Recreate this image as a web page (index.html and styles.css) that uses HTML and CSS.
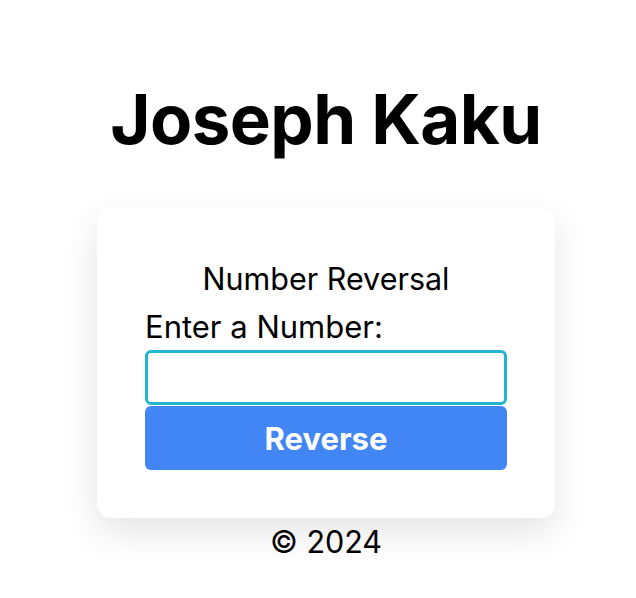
FILE: index.html
```html
<!DOCTYPE html>
<html lang="en">
<head>
<meta charset="utf-8">
<title>Joseph Kaku</title>
<link rel="stylesheet" href="styles.css">
</head>
<body>
<main class="page">
  <h1 class="title">Joseph Kaku</h1>
  <section class="card">
    <h2 class="card-title">Number Reversal</h2>
    <label class="label" for="num">Enter a Number:</label>
    <input class="input" id="num" type="text">
    <button class="button" type="button">Reverse</button>
  </section>
  <footer class="footer">© 2024</footer>
</main>
</body>
</html>
```
FILE: styles.css
```css
html, body {
  margin: 0;
  padding: 0;
  background: #ffffff;
}
body {
  font-family: Inter, "Liberation Sans", sans-serif;
  color: #000;
}
.page {
  display: flex;
  flex-direction: column;
  align-items: center;
  padding: 0 0 0 16px;
}
.title {
  margin: 77px 0 0;
  font-size: 69px;
  font-weight: 700;
  line-height: 84px;
  letter-spacing: -0.6px;
}
.card {
  margin-top: 47px;
  width: 458px;
  box-sizing: border-box;
  padding: 52px 48px 48px;
  background: #fff;
  border-radius: 14px;
  box-shadow: 0 14px 36px rgba(0,0,0,0.11);
  display: flex;
  flex-direction: column;
}
.card-title {
  margin: 0;
  font-size: 30.5px;
  font-weight: 400;
  line-height: 38px;
  text-align: center;
}
.label {
  margin-top: 10px;
  font-size: 31px;
  line-height: 38px;
}
.input {
  margin: 4px 0 0;
  height: 55px;
  box-sizing: border-box;
  border: 3px solid #21b5cf;
  border-radius: 6px;
  outline: none;
  font-size: 24px;
  padding: 0 8px;
}
.button {
  margin-top: 1px;
  height: 64px;
  border: none;
  border-radius: 6px;
  background: #4285f4;
  color: #fff;
  font-family: Inter, "Liberation Sans", sans-serif;
  font-size: 31px;
  font-weight: 700;
}
.footer {
  margin-top: 6px;
  font-size: 30.5px;
  line-height: 36px;
}
```
